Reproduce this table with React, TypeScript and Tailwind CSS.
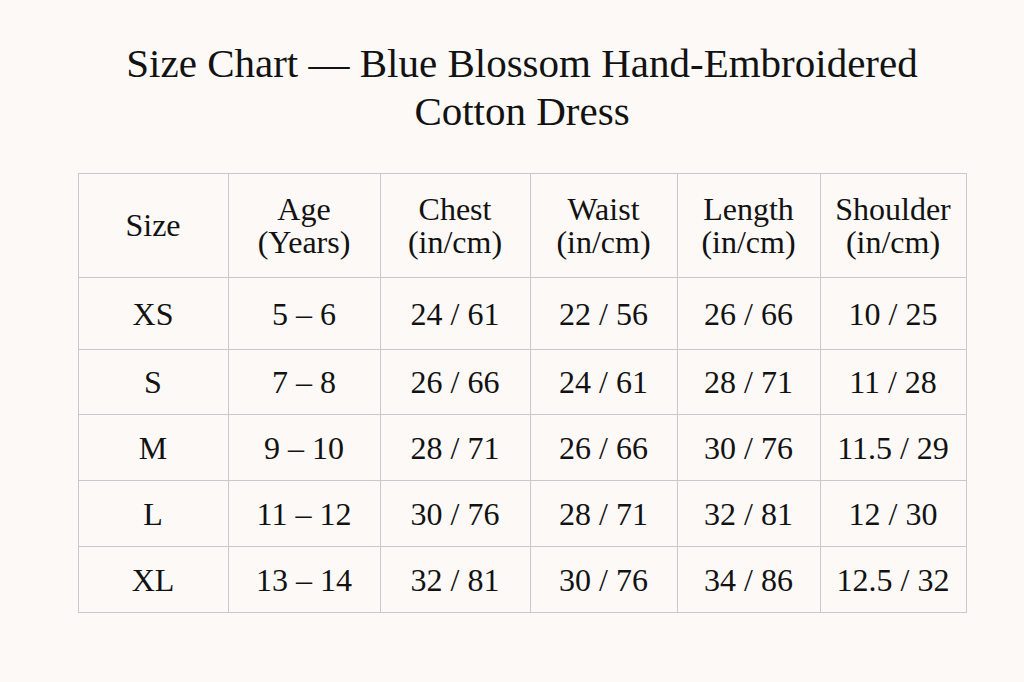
const HEAD = [
  ["Size"],
  ["Age", "(Years)"],
  ["Chest", "(in/cm)"],
  ["Waist", "(in/cm)"],
  ["Length", "(in/cm)"],
  ["Shoulder", "(in/cm)"],
];

const ROWS = [
  ["XS", "5 – 6", "24 / 61", "22 / 56", "26 / 66", "10 / 25"],
  ["S", "7 – 8", "26 / 66", "24 / 61", "28 / 71", "11 / 28"],
  ["M", "9 – 10", "28 / 71", "26 / 66", "30 / 76", "11.5 / 29"],
  ["L", "11 – 12", "30 / 76", "28 / 71", "32 / 81", "12 / 30"],
  ["XL", "13 – 14", "32 / 81", "30 / 76", "34 / 86", "12.5 / 32"],
];

const WIDTHS = ["w-[150px]", "w-[152px]", "w-[150px]", "w-[147px]", "w-[143px]", "w-[146px]"];
const HEIGHTS = ["h-[72px]", "h-[65px]", "h-[66px]", "h-[66px]", "h-[66px]"];

export default function App() {
  return (
    <div className="w-[1024px] h-[682px] bg-[#fcf9f7] text-[#121212] font-['Liberation_Serif','Times_New_Roman',serif] flex flex-col items-center pt-[39px] pl-[20px]">
      <h1 className="text-[41px] leading-[48px] text-center w-[820px]">
        Size Chart — Blue Blossom Hand-Embroidered Cotton Dress
      </h1>
      <table className="mt-[38px] border-collapse table-fixed w-[889px] text-[32px]">
        <colgroup>
          {WIDTHS.map((w, i) => (
            <col key={i} className={w} />
          ))}
        </colgroup>
        <thead>
          <tr className="h-[104px]">
            {HEAD.map((lines, i) => (
              <th key={i} className="border border-[#c9c9c9] font-normal leading-[33px] text-center align-middle">
                {lines.map((l) => (
                  <div key={l}>{l}</div>
                ))}
              </th>
            ))}
          </tr>
        </thead>
        <tbody>
          {ROWS.map((row, r) => (
            <tr key={row[0]} className={HEIGHTS[r]}>
              {row.map((cell, i) => (
                <td key={i} className="border border-[#c9c9c9] text-center align-middle leading-[36px]">
                  {cell}
                </td>
              ))}
            </tr>
          ))}
        </tbody>
      </table>
    </div>
  );
}
